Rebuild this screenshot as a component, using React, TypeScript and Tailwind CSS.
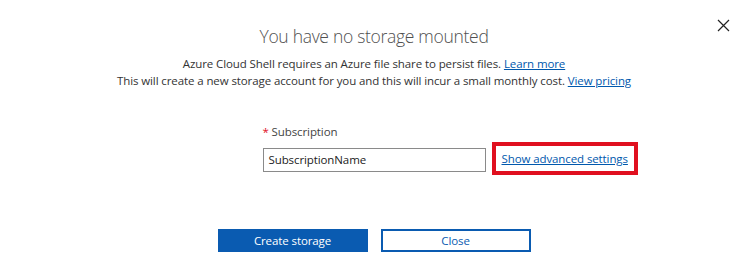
import React from 'react';

export default function App() {
  return (
    <div
      className="relative w-[748px] h-[280px] bg-white overflow-hidden"
      style={{ fontFamily: '"Segoe UI", "Open Sans", "Noto Sans", sans-serif' }}
    >
      <button className="absolute top-[18px] right-[18px] w-[14px] h-[14px] flex items-center justify-center text-[#222]" aria-label="Close">
        <svg width="13" height="13" viewBox="0 0 13 13" fill="none" stroke="currentColor" strokeWidth="1.2">
          <path d="M1 1 L12 12 M12 1 L1 12" />
        </svg>
      </button>

      <div className="flex flex-col items-center pt-[24px]">
        <h1 className="text-[17.5px] font-light leading-[24px] tracking-[-0.3px] text-[#505050]">You have no storage mounted</h1>
        <div className="mt-[7px] text-center text-[11.5px] leading-[17px] tracking-[-0.1px] text-[#333]">
          <p>
            Azure Cloud Shell requires an Azure file share to persist files.{' '}
            <a className="text-[#0058ad] underline">Learn more</a>
          </p>
          <p>
            This will create a new storage account for you and this will incur a small monthly cost.{' '}
            <a className="text-[#0058ad] underline">View pricing</a>
          </p>
        </div>

        <div className="mt-[35px] grid w-full grid-cols-[1fr_223px_1fr] items-start">
          <div className="col-start-2 mb-[2px] text-[11.5px] leading-[16px] tracking-[-0.1px] text-[#444]">
            <span className="text-[#e0101f]">*</span> Subscription
          </div>
          <div className="col-start-2 mt-[6px] h-[24px] border border-[#8a8a8a] px-[5px] text-[11.5px] leading-[22px] tracking-[-0.1px] text-[#222]">
            SubscriptionName
          </div>
          <div className="pl-[6px]">
            <div className="inline-block border-[4px] border-[#e0101f] px-[6px] py-[5px]">
              <a className="block text-[11.5px] leading-[15px] tracking-[-0.1px] text-[#0058ad] underline">Show advanced settings</a>
            </div>
          </div>
        </div>

        <div className="mt-[54px] flex gap-[13px]">
          <button className="h-[23px] w-[150px] bg-[#0a5bb1] text-[11.5px] tracking-[-0.1px] text-white">Create storage</button>
          <button className="h-[23px] w-[150px] border-2 border-[#0a5bb1] bg-white text-[11.5px] tracking-[-0.1px] text-[#0a5bb1]">Close</button>
        </div>
      </div>
    </div>
  );
}
